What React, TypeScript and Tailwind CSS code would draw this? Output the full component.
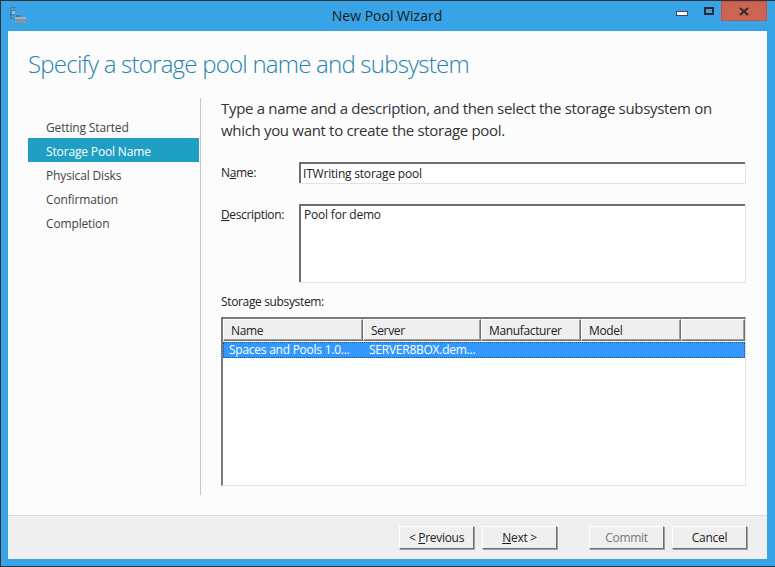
import React from 'react';

const font = { fontFamily: '"Open Sans", "Noto Sans", sans-serif' };

const steps = ['Getting Started', 'Storage Pool Name', 'Physical Disks', 'Confirmation', 'Completion'];

const columns = [
    { label: 'Name', width: 'w-[140px]' },
    { label: 'Server', width: 'w-[118px]' },
    { label: 'Manufacturer', width: 'w-[100px]' },
    { label: 'Model', width: 'w-[100px]' },
    { label: '', width: 'flex-1' },
];

const WizardButton = ({ children, disabled }: { children: React.ReactNode; disabled?: boolean }) => (
    <button
        disabled={disabled}
        className={`w-[75px] h-[23px] bg-[#efefef] border border-t-white border-l-white border-r-[#707070] border-b-[#707070] shadow-[1px_1px_0_#a0a0a0] text-[12px] leading-none tracking-[-0.3px] ${disabled ? 'text-[#777777]' : 'text-[#222222]'}`}
    >
        {children}
    </button>
);

export default function App() {
    return (
        <div style={font} className="w-[775px] h-[567px] flex flex-col bg-[#38a3e6] border border-[#333333] border-r-0 overflow-hidden">
            {/* title bar */}
            <div className="relative h-[30px] shrink-0 flex items-center justify-center text-[14px] text-[#1a1a1a] tracking-[0px]">
                <svg className="absolute left-[9px] top-[6px]" width="17" height="17" viewBox="0 0 17 17">
                    <path d="M0 0h6v1H1v2h5v1H2v3h3v1H2v3h3v1H0z" fill="#4f7fa3" />
                    <rect x="2" y="4" width="3" height="3" fill="#8fc4e6" />
                    <rect x="6" y="8" width="5" height="2" fill="#5f7483" />
                    <rect x="5" y="10" width="11" height="2" fill="#a8b2b8" />
                    <rect x="5" y="13" width="11" height="3" fill="#8d9599" />
                </svg>
                <span className="ml-[-2px] mt-[-2px]">New Pool Wizard</span>
                <div className="absolute top-0 right-[8px] flex items-start">
                    <div className="mt-[10px] mr-[16px] w-[12px] h-[5px] bg-white border border-[#3b4b5a]" />
                    <div className="mt-[6px] mr-[7px] w-[10px] h-[8px] border-2 border-[#2b2b2b]" />
                    <div className="w-[46px] h-[20px] bg-[#cd6350] border border-[#b9554a] flex items-center justify-center">
                        <svg width="10" height="9" viewBox="0 0 10 9">
                            <path d="M1 1l8 7M9 1L1 8" stroke="#2f2f2f" strokeWidth="2.2" fill="none" />
                        </svg>
                    </div>
                </div>
            </div>

            {/* client area */}
            <div className="w-[759px] h-[528px] ml-[7px] flex flex-col bg-[#fcfcfc]">
                <div className="flex-1 flex flex-col min-h-0">
                    <h1 className="pl-[20px] pt-[15px] h-[67px] shrink-0 text-[24px] leading-[36px] text-[#2583ad] tracking-[-0.77px] font-light">
                        Specify a storage pool name and subsystem
                    </h1>
                    <div className="flex pl-[20px]">
                        {/* steps */}
                        <div className="w-[171px] h-[397px] pt-[16px] shrink-0 text-[12px] tracking-[-0.15px] text-[#444444]">
                            {steps.map(step => (
                                <div
                                    key={step}
                                    className={`h-[24px] pl-[18px] pt-[4px] flex items-center ${step === 'Storage Pool Name' ? 'bg-[#1f9fc4] text-white' : ''}`}
                                >
                                    {step}
                                </div>
                            ))}
                        </div>
                        <div className="w-[1px] h-[397px] ml-[1px] bg-[#c4c4c4] shrink-0" />

                        {/* form */}
                        <div className="w-[525px] ml-[20px] text-[12px] tracking-[-0.35px] text-[#222222]">
                            <p className="text-[15px] leading-[22px] h-[53px] mt-[-1px] tracking-[-0.32px] text-[#333333]">
                                Type a name and a description, and then select the storage subsystem on
                                <br />
                                which you want to create the storage pool.
                            </p>
                            <div className="flex items-center h-[21px] mt-[12px]">
                                <label className="w-[78px] pt-[1px]">N<span className="underline">a</span>me:</label>
                                <input
                                    readOnly
                                    value="ITWriting storage pool"
                                    style={font}
                                    className="w-[446px] h-[21px] px-[2px] tracking-[-0.2px] bg-white border-2 border-t-[#6e6e6e] border-l-[#6e6e6e] border-r-0 border-b-0 shadow-[1px_1px_0_#e3e3e3] outline-none"
                                />
                            </div>
                            <div className="flex items-start mt-[21px]">
                                <label className="w-[78px] pt-[1px] leading-[20px]"><span className="underline">D</span>escription:</label>
                                <textarea
                                    readOnly
                                    value="Pool for demo"
                                    style={font}
                                    className="w-[446px] h-[78px] px-[3px] tracking-[-0.2px] bg-white border-2 border-t-[#6e6e6e] border-l-[#6e6e6e] border-r-0 border-b-0 shadow-[1px_1px_0_#e3e3e3] outline-none resize-none leading-[18px]"
                                />
                            </div>
                            <div className="mt-[11px] h-[18px] leading-[18px]">Storage subsystem:</div>

                            {/* subsystem table */}
                            <div className="mt-[6px] w-[525px] h-[169px] bg-white border-2 border-t-[#7a7a7a] border-l-[#7a7a7a] border-r-[#e3e3e3] border-b-[#e3e3e3] border-r-[1px] border-b-[1px]">
                                <div className="flex h-[22px]">
                                    {columns.map((col, i) => (
                                        <div
                                            key={i}
                                            className={`${col.width} h-[22px] pl-[7px] pt-[1px] flex items-center bg-[#efefef] border border-t-white border-l-white border-r-[#707070] border-b-[#707070] shadow-[inset_-1px_-1px_0_#a0a0a0]`}
                                        >
                                            {col.label}
                                        </div>
                                    ))}
                                </div>
                                <div className="flex h-[16px] items-center bg-[#3399ff] text-white border border-dotted border-[#1d4f86] mt-[1px] tracking-[-0.25px]">
                                    <span className="w-[140px] pl-[5px] whitespace-nowrap">Spaces and Pools 1.0...</span>
                                    <span className="pl-[5px] whitespace-nowrap">SERVER8BOX.dem...</span>
                                </div>
                            </div>
                        </div>
                    </div>
                </div>

                {/* footer */}
                <div className="h-[44px] shrink-0 flex justify-end items-start gap-[8px] pt-[10px] pr-[20px] bg-[#efefef] border-t border-[#dcdcdc]">
                    <WizardButton>&lt; <span className="underline">P</span>revious</WizardButton>
                    <WizardButton><span className="underline">N</span>ext &gt;</WizardButton>
                    <div className="w-[16px]" />
                    <WizardButton disabled>Commit</WizardButton>
                    <WizardButton>Cancel</WizardButton>
                </div>
            </div>
        </div>
    );
}
